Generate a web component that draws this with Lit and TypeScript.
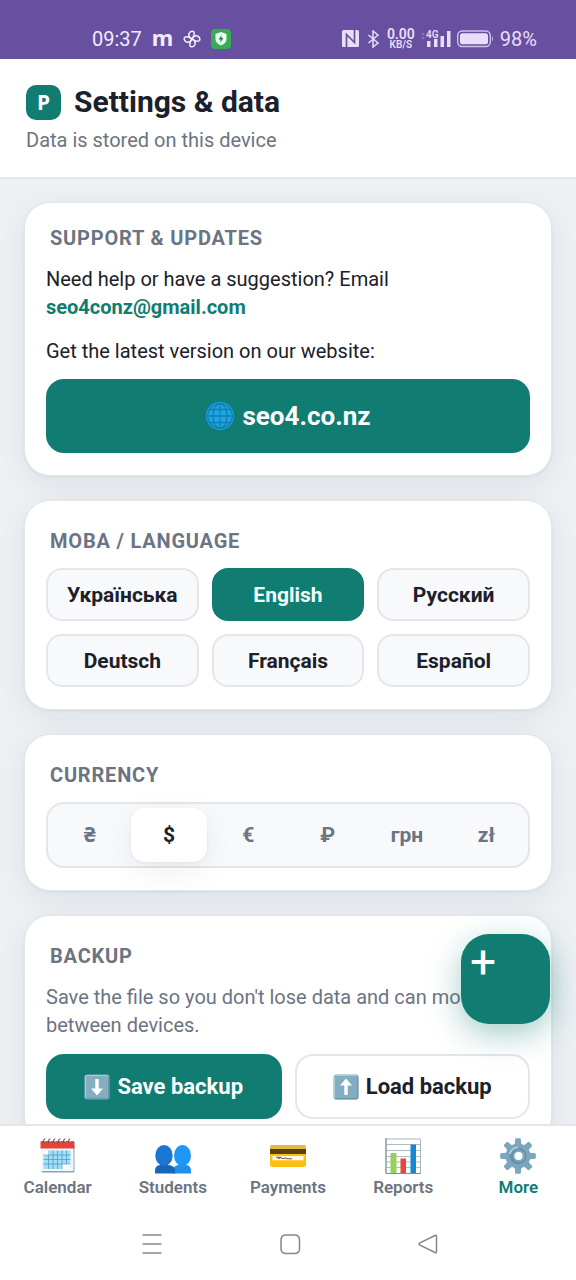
import { LitElement, html, css, svg } from "lit";
import { customElement, state } from "lit/decorators.js";

const globe = html`<svg width="30" height="30" viewBox="0 0 30 30" aria-hidden="true">
  <circle cx="15" cy="15" r="14" fill="#1ba4e6"/>
  <g fill="none" stroke="#1180ac" stroke-width="1.3">
    <circle cx="15" cy="15" r="12.4"/><ellipse cx="15" cy="15" rx="7" ry="12.4"/>
    <path d="M15 2.500v25M2.500 15h25M5 8.500h20M5 21.500h20"/>
  </g></svg>`;

const arrow = (up: boolean) => html`<svg width="26" height="26" viewBox="0 0 26 26" aria-hidden="true">
  <rect x=".5" y=".5" width="25" height="25" rx="2.5" fill="#82aec0"/>
  <path d="M1.5 24V3q0-1.5 1.5-1.5h20" fill="none" stroke="#a9cad6" stroke-width="1.2"/>
  <path d="M2 24.8h21.5q1.3 0 1.3-1.3V3" fill="none" stroke="#5f8fa5" stroke-width="1"/>
  <path d=${up ? "M13 4.500l6 7h-4.300v9.500h-3.400V11.500H7z" : "M13 21.500l6-7h-4.300V5h-3.400v9.500H7z"} fill="#fff"/></svg>`;

const tabIcons: Record<string, unknown> = {
  Calendar: svg`<path d="M2 8h32.500v25q0 1.500-1.500 1.500H3Q1.500 34.500 1.500 33z" fill="#8fa3ad"/><path d="M1 8h32.500v25H1z" fill="#f3f7f8"/>
    <path d="M.500 4.500Q.500 3 2 3h31q1.500 0 1.500 1.500V10.500H.500z" fill="#e2433b"/>
    <path d="M3.500 12.500h27v18.500h-27z" fill="#a4def5"/>
    <path d="M3.500 17h27M3.500 21.500h27M3.500 26h27M8.500 12.500V31M13 12.500V31M17.500 12.500V31M22 12.500V31M26.500 12.500V31" stroke="#4b9fc7" stroke-width=".8"/>
    <path d="M3.500 12.500h5v4h-5zM22.500 26.500h8V31h-8z" fill="#fff"/>
    <path d="M4 5q-1-4 1.500-4M9 5q-1-4 1.500-4M14 5q-1-4 1.500-4M19 5q-1-4 1.500-4M24 5q-1-4 1.500-4M29 5q-1-4 1.500-4" fill="none" stroke="#6a4a4a" stroke-width="1.2"/>
    <path d="M5 4q-.5-3 1-3M10 4q-.5-3 1-3M15 4q-.5-3 1-3M20 4q-.5-3 1-3M25 4q-.5-3 1-3M30 4q-.5-3 1-3" fill="none" stroke="#fff" stroke-width=".8"/>`,
  Students: svg`<path d="M18 35.500v-3q0-5 6-5.500l1-4h5l1 4q5 .5 5 5.500v3z" fill="#1e90ea"/>
    <ellipse cx="27.500" cy="17.500" rx="8.500" ry="10.500" fill="#1f97f4"/>
    <path d="M0 35.500v-3q0-5 5-5.500l1-4h6l1 4q7 .5 7 5.500v3z" fill="#1767b8"/>
    <ellipse cx="9" cy="17.500" rx="8.700" ry="10.500" fill="#1976d2"/>`,
  Payments: svg`<rect y="7" width="36" height="22" rx="2.500" fill="#fdc010"/><path d="M0 11V9.500Q0 7 2.500 7h31Q36 7 36 9.500V11z" fill="#e2bb43"/>
    <path d="M0 11h36v5H0z" fill="#594012"/><path d="M2.500 18h31v4.300h-31z" fill="#fffbe8"/>
    <path d="M6 19.300h5M8 20.800l3-1.300 2 1.300 2-1 2 1h5" fill="none" stroke="#6a5630" stroke-width="1"/>`,
  Reports: svg`<path d="M.5 .5h35v35H.5z" fill="#fdfefe"/><path d="M1 6.500h35M1 12.500h35M1 18.500h35M1 24h35M1 29.500h35" stroke="#b4bcc3" stroke-width="1"/>
    <path d="M1 1h34.500v34.500H1z" fill="none" stroke="#aab5bb"/><path d="M1 0v35.500h35" fill="none" stroke="#7d8c95"/>
    <path d="M5.500 15h6v20h-6z" fill="#97ce5c"/><path d="M15.500 20.500h5.500V35h-5.500z" fill="#e5483f"/><path d="M25.500 6.500H31V35h-5.500z" fill="#1788cf"/>`,
  More: svg`<g fill="#7ba6bd">${[0, 45, 90, 135, 180, 225, 270, 315].map(
      (a) => svg`<path d="M14.500 8l.7-7q.1-.8.9-.8h3.800q.8 0 .9.8l.7 7z" transform="rotate(${a} 18 18)"/>`)}</g>
    <circle cx="18" cy="18" r="12.500" fill="#7ba6bd"/><circle cx="18" cy="18" r="8.500" fill="#6791a9"/>
    <path d="M10 16a8.500 8.500 0 0 1 8-6.500" fill="none" stroke="#b5d3e0" stroke-width="1.600"/>
    <circle cx="19" cy="18" r="6" fill="#7fabc1"/><circle cx="18.500" cy="18" r="4" fill="#fff"/>`,
};

@customElement("app-root")
export class AppRoot extends LitElement {
  @state() language = "English";
  @state() currency = "$";
  @state() tab = "More";

  static styles = css`
    :host {
      --teal: #107c72;
      --ink: #1b202a;
      --muted: #6b7482;
      --line: #e3e7eb;
      --soft: #f7f9fb;
      display: flex;
      flex-direction: column;
      height: 100vh;
      position: relative;
      background: #edf1f4;
      color: var(--ink);
      font-family: Roboto, "Noto Sans", sans-serif;
      font-size: 20px;
      line-height: 28px;
    }
    * { box-sizing: border-box; }
    button { font: inherit; color: inherit; border: 0; background: none; padding: 0; margin: 0; cursor: pointer; }
    svg { display: block; flex: none; }
    h1, h2, p { margin: 0; }
    .status {
      flex: none; display: flex; justify-content: space-between; align-items: center;
      height: 59px; padding: 18px 39px 0 92px; background: #6750a0; color: #f3ecff;
      line-height: 24px;
    }
    .group { display: flex; align-items: center; gap: 10px; }
    .m { font: 700 22px/24px "Noto Sans", sans-serif; padding-bottom: 4px; }
    .right { gap: 6px; color: #e9defa; }
    .rate { display: flex; flex-direction: column; align-items: center; font-size: 14px; line-height: 12px; font-weight: 600; }
    .unit { font-size: 10px; line-height: 10px; }
    .top { flex: none; background: #fff; border-bottom: 2px solid var(--line); padding: 23px 26px 19px; }
    .brand { display: flex; align-items: center; gap: 13px; }
    .logo {
      width: 35px; height: 35px; border-radius: 10px; background: var(--teal); color: #fff;
      display: grid; place-items: center; font: 700 21px/28px "Noto Sans", sans-serif;
    }
    h1 { font-size: 30px; line-height: 40px; font-weight: 700; }
    .sub { color: var(--muted); line-height: 36px; }
    main {
      flex: 1; min-height: 0; overflow-y: auto; scrollbar-width: none;
      display: flex; flex-direction: column; gap: 24px; padding: 23px 24px;
    }
    .card {
      flex: none; background: #fff; border: 1px solid var(--line); border-radius: 26px; padding: 21px 21px 22px;
      box-shadow: 0 1px 3px rgba(20, 30, 55, .06), 0 8px 32px rgba(20, 30, 55, .07);
    }
    h2 { color: var(--muted); font-size: 20px; line-height: 28px; font-weight: 700; letter-spacing: .04em; padding: 5px 4px 13px; }
    .card.first h2 { padding-top: 0; }
    .mail { color: var(--teal); font-weight: 700; text-decoration: none; }
    .gap { margin: 16px 0 14px; }
    .hint { color: var(--muted); margin-bottom: 15px; }
    .primary { background: var(--teal); color: #fff; }
    .site {
      display: flex; align-items: center; justify-content: center; gap: 7px; height: 74px;
      border-radius: 18px; font-size: 26px; font-weight: 700; text-decoration: none;
    }
    .languages { display: grid; grid-template-columns: repeat(3, 1fr); gap: 13px; }
    .choice { height: 53px; border: 2px solid var(--line); border-radius: 16px; background: var(--soft); font-size: 21px; font-weight: 700; }
    .choice.on { background: var(--teal); border-color: var(--teal); color: #f1fffc; }
    .segments {
      display: grid; grid-template-columns: repeat(6, 1fr); gap: 4px; padding: 4px;
      background: var(--soft); border: 2px solid var(--line); border-radius: 18px;
    }
    .segment { height: 54px; border-radius: 14px; color: var(--muted); font-size: 21px; font-weight: 700; }
    .segment.on { background: #fff; color: var(--ink); box-shadow: 0 1px 3px rgba(20, 30, 55, .06), 0 8px 32px rgba(20, 30, 55, .07); }
    .actions { display: grid; grid-template-columns: 1fr 1fr; gap: 13px; }
    .action {
      display: flex; align-items: center; justify-content: center; gap: 7px; height: 65px;
      border-radius: 18px; font-size: 22px; font-weight: 700;
    }
    .plain { border: 2px solid var(--line); background: #fff; }
    .add {
      position: absolute; right: 26px; bottom: 256px; width: 89px; height: 90px; border-radius: 28px;
      display: flex; align-items: flex-start; padding: 8px 9px; font-size: 46px; line-height: 40px; font-weight: 400;
      box-shadow: 0 10px 32px rgba(16, 124, 114, .38);
    }
    .tabs {
      flex: none; display: grid; grid-template-columns: repeat(5, 1fr); background: #fff;
      border-top: 2px solid var(--line); padding: 12px 0 10px;
    }
    .tab {
      display: flex; flex-direction: column; align-items: center; gap: 1px;
      color: var(--muted); font-size: 17px; line-height: 24px; font-weight: 600;
    }
    .tab.on { color: var(--teal); }
    .system { flex: none; display: flex; justify-content: center; gap: 112px; padding: 22px 0 23px 4px; background: #fff; }
  `;

  private statusBar() {
    return html`<div class="status">
      <div class="group">
        <span>09:37</span>
        <span class="m">m</span>
        <svg width="18" height="18" viewBox="0 0 18 18" fill="none" stroke="#f3ecff" stroke-width="1.500">
          ${[0, 90, 180, 270].map((a) => svg`<path d="M9 9Q5 7 6 3.500 7.500 .3 10.500 1.500 12.500 4 9 9z" transform="rotate(${a} 9 9)"/>`)}
        </svg>
        <svg width="20" height="20" viewBox="0 0 20 20"><rect width="20" height="20" rx="4" fill="#36ad55"/>
          <path d="M10 3l5.500 2v5q0 4-5.500 6.500Q4.500 14 4.500 10V5z" fill="#eafff0"/><path d="M10.500 6L7.500 10.500h2v3l3-4.500h-2z" fill="#278a41"/></svg>
      </div>
      <div class="group right">
        <svg width="17" height="17" viewBox="0 0 17 17"><rect width="17" height="17" rx="1.500" fill="#e9defa"/>
          <path d="M4.500 17V4.500l7 7M12.500 0v12.500l-7-7" fill="none" stroke="#6750a0" stroke-width="1.700"/></svg>
        <svg width="16" height="18" viewBox="-2 0 16 18" fill="none" stroke="#e9defa" stroke-width="1.500"><path d="M1.500 5l9.500 8-5 4V1l5 4-9.500 8"/></svg>
        <span class="rate"><span>0.00</span><span class="unit">KB/S</span></span>
        <svg width="30" height="20" viewBox="0 0 30 20" fill="#e9defa">
          <path d="M0 6l2-3 2 3zM0 8l2 3 2-3z" fill="#8874b9"/>
          <text x="5" y="9" font-family="Roboto, sans-serif" font-size="10" font-weight="600">4G</text>
          <path d="M6 12h3.500v6H6zM13 10h3.500v8H13zM19.500 7H23v11h-3.500zM26 2h3.500v16H26z"/></svg>
        <svg width="37" height="18" viewBox="0 0 37 18"><rect x=".7" y="1" width="32.600" height="15.500" rx="4.500" fill="none" stroke="#cfc0ea" stroke-width="1.400"/>
          <rect x="3" y="3.200" width="28" height="11" rx="2.500" fill="#e9defa"/><path d="M35 6q2 2.700 0 5.500z" fill="#cfc0ea"/></svg>
        <span>98%</span>
      </div>
    </div>`;
  }

  render() {
    return html`
      ${this.statusBar()}
      <header class="top">
        <div class="brand"><span class="logo">P</span><h1>Settings &amp; data</h1></div>
        <p class="sub">Data is stored on this device</p>
      </header>
      <main>
        <section class="card first">
          <h2>SUPPORT &amp; UPDATES</h2>
          <p>Need help or have a suggestion? Email<br /><a class="mail" href="mailto:seo4conz@gmail.com">seo4conz@gmail.com</a></p>
          <p class="gap">Get the latest version on our website:</p>
          <a class="site primary" href="#site">${globe}<span>seo4.co.nz</span></a>
        </section>
        <section class="card">
          <h2>МОВА / LANGUAGE</h2>
          <div class="languages">
            ${["Українська", "English", "Русский", "Deutsch", "Français", "Español"].map((l) => html`
              <button class="choice ${l === this.language ? "on" : ""}" aria-pressed=${l === this.language} @click=${() => (this.language = l)}>${l}</button>`)}
          </div>
        </section>
        <section class="card">
          <h2>CURRENCY</h2>
          <div class="segments">
            ${["₴", "$", "€", "₽", "грн", "zł"].map((c) => html`
              <button class="segment ${c === this.currency ? "on" : ""}" aria-pressed=${c === this.currency} @click=${() => (this.currency = c)}>${c}</button>`)}
          </div>
        </section>
        <section class="card">
          <h2>BACKUP</h2>
          <p class="hint">Save the file so you don't lose data and can move it between devices.</p>
          <div class="actions">
            <button class="action primary">${arrow(false)}<span>Save backup</span></button>
            <button class="action plain">${arrow(true)}<span>Load backup</span></button>
          </div>
        </section>
      </main>
      <nav class="tabs">
        ${Object.keys(tabIcons).map((t) => html`
          <button class="tab ${t === this.tab ? "on" : ""}" @click=${() => (this.tab = t)}>
            <svg width="36" height="36" viewBox="0 0 36 36" aria-hidden="true">${tabIcons[t]}</svg><span>${t}</span>
          </button>`)}
      </nav>
      <div class="system">
        ${["M3.500 4h19M3.500 13h19M3.500 22h19",
          "M9 4h8.500q5 0 5 5v8.500q0 5-5 5H9q-5 0-5-5V9q0-5 5-5z",
          "M4.500 12.200q-1 .8 0 1.600L20 21.500q1.500.7 1.500-1V5.500q0-1.700-1.500-1z"].map((d, i) => html`
          <button aria-label=${["Recent apps", "Home", "Back"][i]}>
            <svg width="26" height="26" viewBox="0 0 26 26" fill="none" stroke="#85878a" stroke-width="1.500"><path d=${d}/></svg>
          </button>`)}
      </div>
      <button class="add primary" aria-label="Add">+</button>
    `;
  }
}
